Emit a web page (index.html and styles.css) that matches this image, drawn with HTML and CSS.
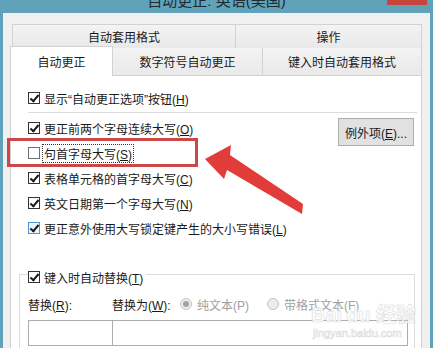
FILE: index.html
```html
<!DOCTYPE html>
<html>
<head>
    <title>自动更正</title>
    <link rel="stylesheet" href="styles.css">
</head>
<body>
    <div class="titlebar">
        <div class="title">自动更正: 英语(美国)</div>
        <div class="close"></div>
    </div>
    <div class="window">
        <div class="tabs">
            <div class="tab-row top">
                <div class="tab wide">自动套用格式</div>
                <div class="tab">操作</div>
            </div>
            <div class="tab-row">
                <div class="tab active">自动更正</div>
                <div class="tab mid">数字符号自动更正</div>
                <div class="tab">键入时自动套用格式</div>
            </div>
        </div>
        <div class="panel">
            <div class="row first">
                <span class="check on"></span>
                <span>显示“自动更正选项”按钮(<u>H</u>)</span>
            </div>
            <div class="sep"></div>
            <div class="opts-main">
                <div class="opts-list">
                    <div class="row">
                        <span class="check on"></span>
                        <span>更正前两个字母连续大写(<u>O</u>)</span>
                    </div>
                    <div class="row">
                        <span class="check off"></span>
                        <span class="focus">句首字母大写(<u>S</u>)</span>
                    </div>
                    <div class="row">
                        <span class="check on"></span>
                        <span>表格单元格的首字母大写(<u>C</u>)</span>
                    </div>
                    <div class="row">
                        <span class="check on"></span>
                        <span>英文日期第一个字母大写(<u>N</u>)</span>
                    </div>
                    <div class="row">
                        <span class="check on hover"></span>
                        <span>更正意外使用大写锁定键产生的大小写错误(<u>L</u>)</span>
                    </div>
                </div>
                <button class="exc-btn">例外项(<u>E</u>)...</button>
            </div>
            <div class="group">
                <div class="legend">
                    <span class="check on"></span>
                    <span>键入时自动替换(<u>T</u>)</span>
                </div>
                <div class="replace-head">
                    <span class="lbl-from">替换(<u>R</u>):</span>
                    <span class="lbl-to">替换为(<u>W</u>):</span>
                    <span class="radio sel"></span>
                    <span class="dim">纯文本(P)</span>
                    <span class="radio"></span>
                    <span class="dim">带格式文本(F)</span>
                </div>
                <div class="boxes">
                    <div class="box from"></div>
                    <div class="box to"></div>
                </div>
            </div>
        </div>
    </div>

    <!-- annotation overlay -->
    <div class="mark"></div>
    <svg class="arrow" width="433" height="348" viewBox="0 0 433 348">
        <polygon points="205,159 231,145 230,155 303,204 302,214 227,170 224,179" fill="#e23c3a"/>
    </svg>
    <div class="watermark">
        <div class="wm-big">Bai<span class="wm-gap"></span>du 经验</div>
        <div class="wm-small">jingyan.baidu.com</div>
    </div>
</body>
</html>
```

FILE: styles.css
```css
body {
    margin: 0;
    width: 433px;
    height: 348px;
    overflow: hidden;
    background-color: #5fa2ba;
    font-family: "Liberation Sans", "Noto Sans CJK SC", sans-serif;
    font-size: 12px;
    color: #1a1a1a;
    position: relative;
}
.titlebar {
    height: 13px;
    overflow: hidden;
    display: flex;
    padding-left: 46px;
}
.title {
    flex: 1;
    text-align: center;
    font-size: 15px;
    line-height: 18px;
    margin-top: -8px;
    color: #202a30;
}
.close {
    width: 40px;
    height: 5px;
    margin-right: 6px;
    background-color: #c8453e;
}
.window {
    margin: 0 3px;
    height: 335px;
    background-color: #f0f0f0;
    padding: 11px 0 0 7px;
    box-sizing: border-box;
}
.tabs {
    width: 412px;
}
.tab-row {
    display: flex;
    height: 25px;
}
.tab-row.top {
    margin-left: 2px;
    height: 24px;
}
.tab {
    flex: 1;
    display: flex;
    align-items: center;
    justify-content: center;
    border: 1px solid #d2d2d2;
    border-bottom: none;
    background: linear-gradient(#f3f3f3, #e9e9e9);
    box-sizing: border-box;
}
.tab.wide {
    flex: none;
    width: 223px;
    border-right: none;
}
.tab-row:not(.top) .tab {
    height: 27px;
    border-top: none;
}
.tab.active {
    flex: none;
    width: 103px;
    height: 30px !important;
    margin-top: -2px;
    border-top: 1px solid #d2d2d2 !important;
    background: #fff;
    position: relative;
    z-index: 1;
    padding-bottom: 1px;
}
.tab.mid {
    flex: none;
    width: 149px;
    border-left: none;
    border-right: none;
}
.panel {
    width: 412px;
    height: 280px;
    margin-top: 2px;
    background-color: #fff;
    border: 1px solid #d2d2d2;
    box-sizing: border-box;
    padding: 12px 4px 0 17px;
}
.row {
    display: flex;
    align-items: center;
    height: 20px;
    gap: 4px;
    white-space: nowrap;
}
.opts-list .row + .row {
    margin-top: 5px;
}
.check {
    width: 12px;
    height: 12px;
    border: 1px solid #333;
    box-sizing: border-box;
    background: #fff;
    flex: none;
    position: relative;
}
.check.off {
    border-color: #707070;
}
.check.on::after {
    content: "";
    position: absolute;
    left: 3px;
    top: 0px;
    width: 3px;
    height: 7px;
    border: solid #1a1a1a;
    border-width: 0 2px 2px 0;
    transform: rotate(40deg);
}
.check.hover {
    border-color: #4f98d6;
    background: #eef6fd;
}
.focus {
    outline: 1px dotted #333;
    outline-offset: 0;
    padding: 0 1px;
    margin-left: -1px;
}
.sep {
    height: 1px;
    background-color: #dcdcdc;
    margin: 4px 0 5px;
}
.opts-main {
    display: flex;
    justify-content: space-between;
    align-items: flex-start;
}
.exc-btn {
    width: 76px;
    height: 28px;
    margin-right: 3px;
    background: #e1e1e1;
    border: 1px solid #adadad;
    font-family: inherit;
    font-size: 12px;
    color: #1a1a1a;
    padding: 0;
}
.group {
    margin: 36px 0 0 -9px;
    width: 396px;
    height: 80px;
    border: 1px solid #dcdcdc;
    border-bottom: none;
    box-sizing: border-box;
    padding-left: 8px;
}
.legend {
    display: inline-flex;
    align-items: center;
    gap: 4px;
    height: 16px;
    margin-top: -6px;
    padding-right: 3px;
    background: #fff;
    vertical-align: top;
}
.replace-head {
    display: flex;
    align-items: center;
    height: 18px;
    margin-top: 6px;
    white-space: nowrap;
}
.lbl-from {
    width: 84px;
}
.lbl-to {
    width: 68px;
}
.radio {
    width: 12px;
    height: 12px;
    border-radius: 50%;
    border: 1px solid #c4c4c4;
    background: #ececec;
    box-sizing: border-box;
    margin-right: 5px;
    position: relative;
}
.radio.sel::after {
    content: "";
    position: absolute;
    left: 2px;
    top: 2px;
    width: 6px;
    height: 6px;
    border-radius: 50%;
    background: #a3a3a3;
}
.dim {
    color: #a0a0a0;
    margin-right: 18px;
}
.boxes {
    display: flex;
    margin-top: 7px;
}
.box {
    height: 26px;
    border: 1px solid #acacac;
    box-sizing: border-box;
    background: #fff;
}
.box.from {
    width: 84px;
    border-right: none;
}
.box.to {
    width: 296px;
}
.mark {
    position: absolute;
    left: 7px;
    top: 138px;
    width: 191px;
    height: 29px;
    border: 3px solid #cc4747;
    box-sizing: border-box;
}
.arrow {
    position: absolute;
    left: 0;
    top: 0;
}
.watermark {
    position: absolute;
    left: 311px;
    top: 305px;
    color: #fff;
    font-family: "Liberation Sans", "Noto Sans CJK SC", sans-serif;
    -webkit-text-stroke: 0.6px #d6d6d6;
    opacity: 0.85;
}
.wm-big {
    font-size: 20px;
    font-weight: bold;
    line-height: 20px;
}
.wm-gap {
    display: inline-block;
    width: 4px;
}
.wm-small {
    font-size: 11px;
    line-height: 12px;
    margin-left: 2px;
    margin-top: 2px;
}
```
